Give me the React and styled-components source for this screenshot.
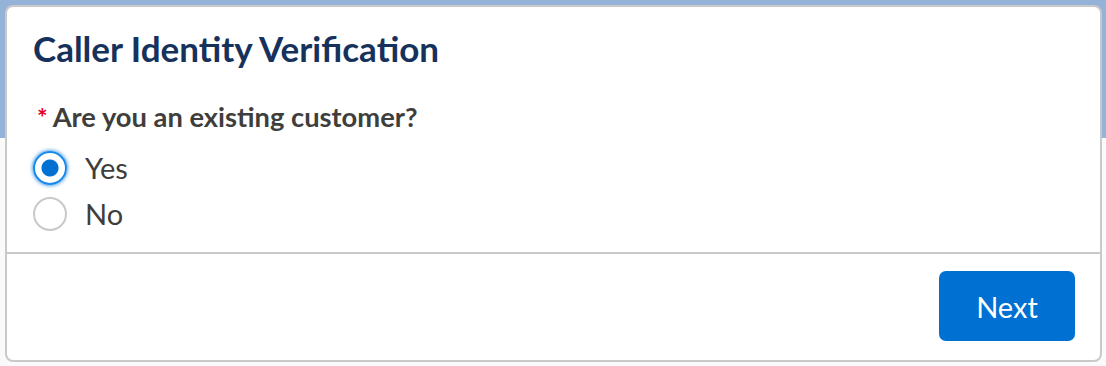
import React, { useState } from 'react';
import styled, { createGlobalStyle } from 'styled-components';

const GlobalStyle = createGlobalStyle`
  html, body {
    margin: 0;
    padding: 0;
  }
  body {
    font-family: Lato, "Noto Sans", "Liberation Sans", sans-serif;
    background: #fafafa;
  }
`;

const Page = styled.div`
  width: 1106px;
  height: 366px;
  box-sizing: border-box;
  padding: 5px 4px 0 5px;
  background: linear-gradient(#95b3d9 0, #95b3d9 138px, #fafafa 138px);
`;

const Card = styled.section`
  box-sizing: border-box;
  height: 357px;
  background: #fff;
  border: 2px solid #c9c9c9;
  border-radius: 8px;
  display: flex;
  flex-direction: column;
`;

const Body = styled.div`
  flex: 1;
  padding: 19px 26px 0 26px;
`;

const Title = styled.h2`
  margin: 0;
  font-size: 35px;
  font-weight: 700;
  color: #16325c;
  line-height: 44px;
`;

const Fieldset = styled.fieldset`
  border: 0;
  margin: 30px 0 0 0;
  padding: 0;
`;

const Legend = styled.legend`
  padding: 0;
  font-size: 27.3px;
  font-weight: 700;
  color: #3e3e3c;
  line-height: 34px;
  display: flex;
  align-items: baseline;
`;

const Required = styled.abbr`
  color: #e0001a;
  text-decoration: none;
  margin: 0 5px 0 4px;
  font-size: 25px;
  font-weight: 700;
`;

const Options = styled.div`
  display: flex;
  flex-direction: column;
  gap: 12px;
  margin-top: 17px;
`;

const Option = styled.label`
  display: flex;
  align-items: center;
  gap: 18px;
  font-size: 29px;
  color: #3e3e3c;
  cursor: pointer;
  line-height: 34px;
`;

const RadioInput = styled.input.attrs({ type: 'radio' })`
  appearance: none;
  margin: 0;
  width: 34px;
  height: 34px;
  border-radius: 50%;
  box-sizing: border-box;
  border: 2px solid ${p => (p.checked ? '#1589ee' : '#c9c9c9')};
  background: ${p =>
    p.checked
      ? 'radial-gradient(circle, #0070d2 0, #0070d2 8px, #fff 9px)'
      : '#fff'};
  box-shadow: ${p => (p.checked ? '0 0 4px #0070d2' : 'none')};
  outline: none;
  cursor: pointer;
`;

const Footer = styled.footer`
  border-top: 2px solid #c9c9c9;
  display: flex;
  justify-content: flex-end;
  padding: 17px 25px 19px 0;
`;

const NextButton = styled.button`
  width: 136px;
  height: 70px;
  border: 0;
  border-radius: 7px;
  background: #0070d2;
  color: #fff;
  font-family: Lato, "Noto Sans", sans-serif;
  font-size: 29px;
  cursor: pointer;
`;

const App = () => {
  const [answer, setAnswer] = useState('yes');

  return (
    <>
      <GlobalStyle />
      <Page>
        <Card>
          <Body>
            <Title>Caller Identity Verification</Title>
            <Fieldset>
              <Legend>
                <Required title="required">*</Required>
                Are you an existing customer?
              </Legend>
              <Options>
                <Option>
                  <RadioInput
                    name="existing"
                    checked={answer === 'yes'}
                    onChange={() => setAnswer('yes')}
                  />
                  Yes
                </Option>
                <Option>
                  <RadioInput
                    name="existing"
                    checked={answer === 'no'}
                    onChange={() => setAnswer('no')}
                  />
                  No
                </Option>
              </Options>
            </Fieldset>
          </Body>
          <Footer>
            <NextButton>Next</NextButton>
          </Footer>
        </Card>
      </Page>
    </>
  );
};

export default App;
